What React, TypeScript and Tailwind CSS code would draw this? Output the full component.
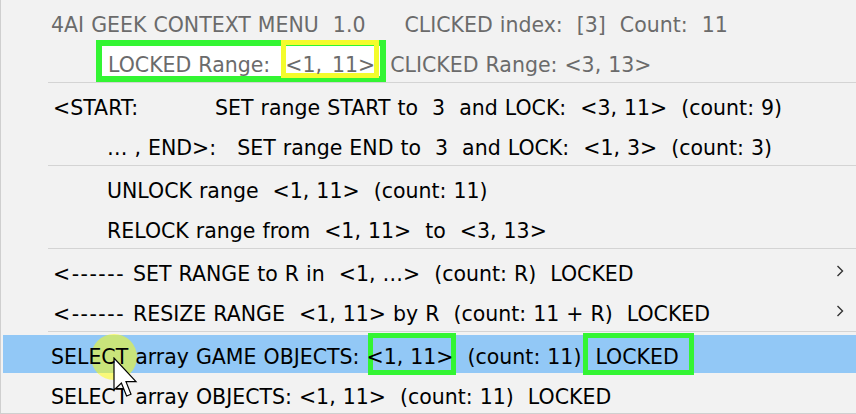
import React from "react";

const Sep = () => (
  <div className="h-[3px] flex items-start">
    <div className="ml-[47px] h-px flex-1 bg-[#d4d4d4]" />
  </div>
);

function Row({
  children,
  className = "",
  sub = false,
}: {
  children: React.ReactNode;
  className?: string;
  sub?: boolean;
}) {
  return (
    <div className={`h-[40px] pt-[6px] flex items-center whitespace-pre relative ${className}`}>
      {children}
      {sub && (
        <svg className="absolute right-[12px] top-[14px] w-[8px] h-[12px]" viewBox="0 0 8 12">
          <path d="M1.5 1 L6.5 6 L1.5 11" fill="none" stroke="#333" strokeWidth="1.4" />
        </svg>
      )}
    </div>
  );
}

export default function App() {
  return (
    <div className="w-[856px] h-[414px] bg-[#f2f2f2] border-l border-b border-[#cfcfcf] overflow-hidden relative font-['DejaVu_Sans',sans-serif] text-[20.5px] [word-spacing:0.5px] text-black leading-none">
      <div className="pt-[2px]">
        <Row className="text-[#6b6b6b]">
          <span className="ml-[50px]">4AI GEEK CONTEXT MENU  1.0</span>
          <span className="ml-[39px]">CLICKED index:  [3]  Count:  11</span>
        </Row>
        <Row className="text-[#6b6b6b]">
          <div className="absolute left-[95px] top-[-2px] w-[290px] h-[42px] bg-white border-[6px] border-[#33f533]" />
          <div className="absolute left-[280px] top-[-2px] w-[98px] h-[38px] border-[5px] border-[#f4fc2c]" />
          <span className="ml-[107px] relative z-10">LOCKED Range:</span>
          <span className="ml-[15px] relative z-10">{"<1,"}</span>
          <span className="ml-[10px] relative z-10">{"11>"}</span>
          <span className="ml-[15px] relative z-10">{"CLICKED Range: <3, 13>"}</span>
        </Row>
        <Sep />
        <Row>
          <span className="ml-[52px]">{"<START:"}</span>
          <span className="ml-[77px]">{"SET range START to  3  and LOCK:  <3, 11>  (count: 9)"}</span>
        </Row>
        <Row>
          <span className="ml-[106px]">{"… , END>:"}</span>
          <span className="ml-[21px]">{"SET range END to  3  and LOCK:  <1, 3>  (count: 3)"}</span>
        </Row>
        <Sep />
        <Row>
          <span className="ml-[106px]">{"UNLOCK range  <1, 11>  (count: 11)"}</span>
        </Row>
        <Row>
          <span className="ml-[106px]">{"RELOCK range from  <1, 11>  to  <3, 13>"}</span>
        </Row>
        <Sep />
        <Row sub>
          <span className="ml-[52px] tracking-[1.5px]">{"<------"}</span>
          <span className="ml-[8px]">{"SET RANGE to R in  <1, …>  (count: R)  LOCKED"}</span>
        </Row>
        <Row sub>
          <span className="ml-[52px] tracking-[1.5px]">{"<------"}</span>
          <span className="ml-[8px]">{"RESIZE RANGE  <1, 11> by R  (count: 11 + R)  LOCKED"}</span>
        </Row>
        <Sep />
        <div className="h-[40px] flex items-center pl-[2px]">
          <div className="h-[38px] pt-[6px] flex-1 bg-[#92c8f6] flex items-center whitespace-pre relative">
            <div className="absolute left-[365px] top-[-2px] w-[88px] h-[42px] border-[5px] border-[#33f533]" />
            <div className="absolute left-[580px] top-[-2px] w-[111px] h-[42px] border-[5px] border-[#33f533]" />
            <span className="ml-[48px] relative z-10">{"SELECT array GAME OBJECTS: <1, 11>  (count: 11)  LOCKED"}</span>
          </div>
        </div>
        <Row>
          <span className="ml-[50px]">{"SELECT array OBJECTS: <1, 11>  (count: 11)  LOCKED"}</span>
        </Row>
      </div>
      <div className="absolute left-[90px] top-[334px] w-[46px] h-[46px] rounded-full bg-[#ffff00]/50" />
      <svg className="absolute left-[112px] top-[357px] w-[26px] h-[42px]" viewBox="0 0 13 21">
        <path
          d="M0.5 0.5 L0.5 16.5 L4.2 13 L6.8 19.5 L9 18.6 L6.5 12.3 L11.5 12.3 Z"
          fill="white"
          stroke="black"
          strokeWidth="0.6"
          strokeLinejoin="miter"
        />
      </svg>
    </div>
  );
}
